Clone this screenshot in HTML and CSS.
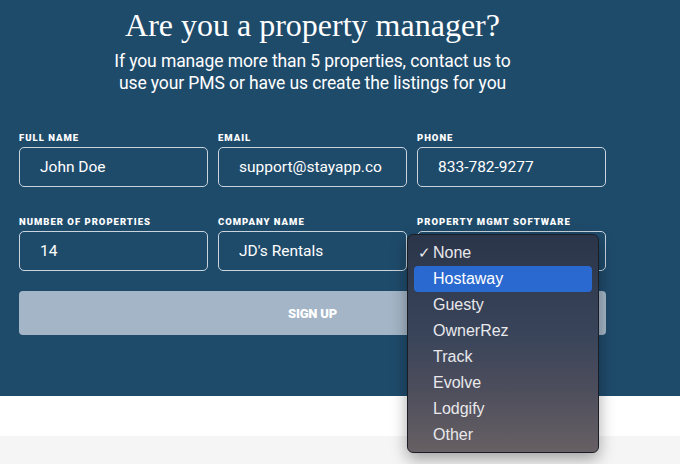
FILE: index.html
```html
<!DOCTYPE html>
<html lang="en">

<head>
    <meta charset="UTF-8">
    <meta name="viewport" content="width=device-width, initial-scale=1.0">
    <title>Property managers</title>
    <link rel="stylesheet" href="styles.css">
</head>

<body>

    <section class="pm">
        <div class="container">
            <h1>Are you a property manager?</h1>
            <p class="lead">If you manage more than 5 properties, contact us to<br>use your PMS or have us create the listings for you</p>

            <form class="pm-form">
                <div class="form-input">
                    <label>Full Name</label>
                    <input type="text" value="John Doe">
                </div>
                <div class="form-input">
                    <label>Email</label>
                    <input type="text" value="support@stayapp.co">
                </div>
                <div class="form-input">
                    <label>Phone</label>
                    <input type="text" value="833-782-9277">
                </div>
                <div class="form-input">
                    <label>Number of Properties</label>
                    <input type="text" value="14">
                </div>
                <div class="form-input">
                    <label>Company Name</label>
                    <input type="text" value="JD's Rentals">
                </div>
                <div class="form-input">
                    <label>Property Mgmt Software</label>
                    <div class="select">
                        <ul class="menu">
                            <li class="checked">None</li>
                            <li class="active">Hostaway</li>
                            <li>Guesty</li>
                            <li>OwnerRez</li>
                            <li>Track</li>
                            <li>Evolve</li>
                            <li>Lodgify</li>
                            <li>Other</li>
                        </ul>
                    </div>
                </div>
                <button type="submit" id="btn">Sign up</button>
            </form>
        </div>
    </section>

    <div class="spacer"></div>
    <div class="footer"></div>

</body>

</html>
```

FILE: styles.css
```css
* {
    padding: 0;
    margin: 0;
    box-sizing: border-box;
}

body {
    font-family: Roboto, "Liberation Sans", sans-serif;
    background-color: #f5f5f5;
}

.pm {
    background-color: #1f4b6b;
    color: #fff;
    height: 396px;
    padding-top: 6px;
}

.container {
    width: 587px;
    margin-left: 19px;
}

h1 {
    font-family: "Liberation Serif", serif;
    font-weight: normal;
    font-size: 32px;
    line-height: 38px;
    text-align: center;
}

.lead {
    text-align: center;
    font-size: 17.5px;
    line-height: 22px;
    margin-top: 6px;
    letter-spacing: -0.1px;
}

.pm-form {
    display: grid;
    grid-template-columns: repeat(3, 1fr);
    column-gap: 10px;
    row-gap: 30px;
    margin-top: 39px;
}

.form-input {
    position: relative;
}

.form-input label {
    display: block;
    font-size: 9.5px;
    font-weight: 900;
    letter-spacing: 1px;
    text-transform: uppercase;
    line-height: 10px;
    margin-bottom: 4px;
}

.form-input input,
.select {
    display: block;
    width: 100%;
    height: 40px;
    border: 1px solid #c9d4de;
    border-radius: 5px;
    background-color: transparent;
    color: #fff;
    font-family: Roboto, "Liberation Sans", sans-serif;
    font-size: 15.5px;
    padding-left: 20px;
    outline: none;
}

.select {
    position: relative;
}

.menu {
    list-style: none;
    position: absolute;
    left: -11px;
    top: 2px;
    width: 192px;
    height: 219px;
    padding: 5px 6px;
    border: 1px solid #1a1d24;
    border-radius: 6px;
    background: linear-gradient(#2b3549, #39445a 45%, #4c4d5c 70%, #676064);
    box-shadow: 0 6px 16px rgba(0, 0, 0, 0.35);
    font-family: "Liberation Sans", sans-serif;
    font-size: 16px;
    color: #e9e9ec;
    z-index: 2;
}

.menu li {
    height: 26px;
    line-height: 26px;
    padding-left: 19px;
    border-radius: 4px;
    position: relative;
}

.menu li.checked::before {
    content: "\2713";
    position: absolute;
    left: 4px;
    font-size: 15px;
}

.menu li.active {
    background-color: #2a69d0;
    color: #fff;
}

#btn {
    grid-column: 1 / 4;
    height: 44px;
    margin-top: -10px;
    border: none;
    border-radius: 4px;
    background-color: #a3b5c6;
    color: #fff;
    font-family: Roboto, "Liberation Sans", sans-serif;
    font-weight: 900;
    font-size: 13px;
    text-transform: uppercase;
    letter-spacing: -0.2px;
}

.spacer {
    height: 40px;
    background-color: #fff;
}

.footer {
    height: 28px;
}
```
